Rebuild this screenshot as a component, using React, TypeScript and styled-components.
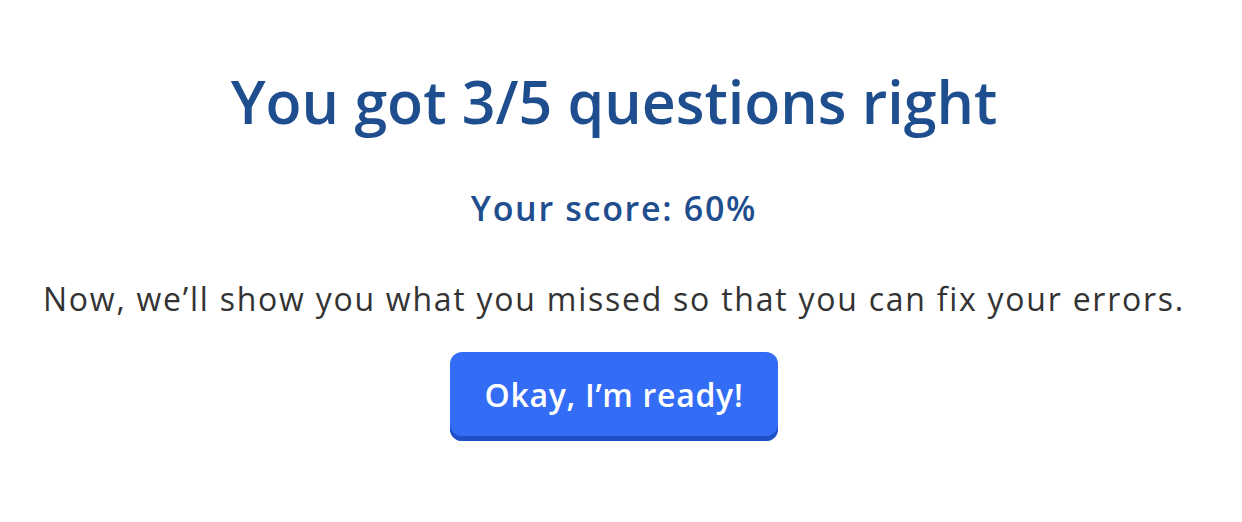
import React from "react";
import styled, { createGlobalStyle } from "styled-components";

const GlobalStyle = createGlobalStyle`
  html, body {
    margin: 0;
    padding: 0;
    background: #ffffff;
  }
  body {
    font-family: "Open Sans", Lato, sans-serif;
  }
`;

const Page = styled.main`
  display: flex;
  flex-direction: column;
  align-items: center;
  padding: 61px 0 0 0;
  width: 1228px;
  text-align: center;
`;

const Title = styled.h1`
  margin: 0;
  font-size: 59px;
  line-height: 80px;
  font-weight: 600;
  color: #1f4e8f;
`;

const Score = styled.h2`
  margin: 45px 0 0 0;
  font-size: 34px;
  line-height: 44px;
  font-weight: 600;
  letter-spacing: 1.7px;
  color: #1f4e8f;
`;

const Message = styled.p`
  margin: 47px 0 0 0;
  font-size: 32px;
  line-height: 44px;
  font-weight: 400;
  letter-spacing: 1.75px;
  color: #333333;
`;

const ReadyButton = styled.button`
  margin-top: 31px;
  width: 328px;
  height: 89px;
  padding: 0 0 5px 0;
  border: none;
  border-radius: 12px;
  background: #336df5;
  box-shadow: inset 0 -5px 0 #1f4fc4;
  color: #ffffff;
  font-family: "Open Sans", sans-serif;
  font-size: 32px;
  font-weight: 600;
  letter-spacing: 0.7px;
  cursor: pointer;
`;

export default function App() {
  return (
    <>
      <GlobalStyle />
      <Page>
        <Title>You got 3/5 questions right</Title>
        <Score>Your score: 60%</Score>
        <Message>Now, we’ll show you what you missed so that you can fix your errors.</Message>
        <ReadyButton>Okay, I’m ready!</ReadyButton>
      </Page>
    </>
  );
}
